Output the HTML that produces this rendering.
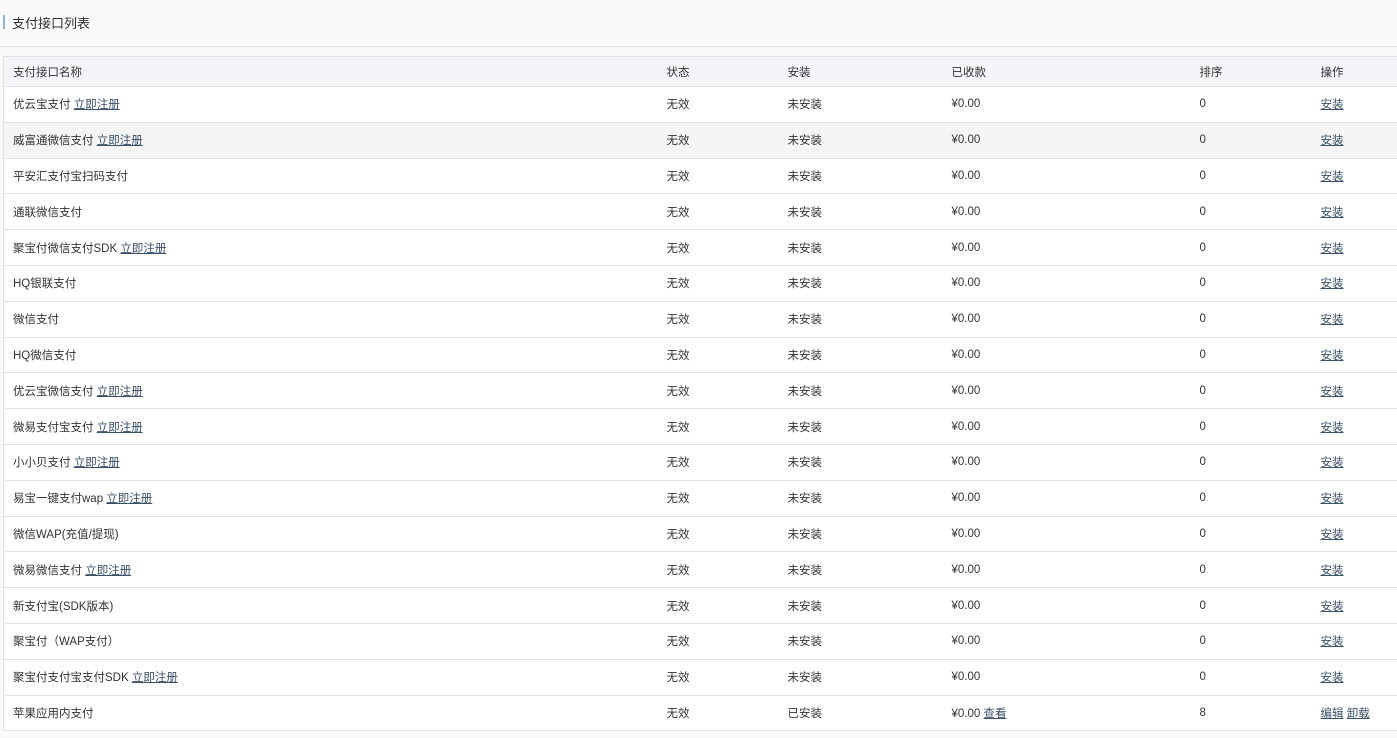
<!DOCTYPE html>
<html><head><meta charset="utf-8"><style>
*{margin:0;padding:0;box-sizing:border-box}
body{width:1397px;height:738px;background:#fafafa;font-family:"Liberation Sans","Noto Sans CJK SC",sans-serif;font-size:11.5px;color:#333;position:relative;overflow:hidden}
.title{position:absolute;left:0;top:0;width:1397px;height:47px;border-bottom:1px solid #ddd;background:#fafafa}
.bar{position:absolute;left:3px;top:15px;width:2px;height:14px;background:#8fb3d9}
.tt{position:absolute;left:12px;top:13px;font-size:13px;color:#333}
table{position:absolute;left:3px;top:56px;width:1394px;border-collapse:collapse;background:#fff;table-layout:fixed}
td{height:35.8px;border-bottom:1px solid #e2e2e2;padding:0;white-space:nowrap;vertical-align:middle}
tr td:first-child{padding-left:9px;border-left:1px solid #e2e2e2}
tr.head td{height:30px;background:#f4f5f9;border-top:1px solid #e2e2e2}
tr.hl td{background:#f5f5f5}
a{color:#3a5068;text-decoration:underline}
</style></head><body>
<div class="title"><div class="bar"></div><div class="tt">支付接口列表</div></div>
<table>
<colgroup><col style="width:663px"><col style="width:121px"><col style="width:164px"><col style="width:248px"><col style="width:121px"><col></colgroup>
<tr class="head"><td>支付接口名称</td><td>状态</td><td>安装</td><td>已收款</td><td>排序</td><td>操作</td></tr>
<tr><td>优云宝支付 <a>立即注册</a></td><td>无效</td><td>未安装</td><td>¥0.00</td><td>0</td><td><a>安装</a></td></tr>
<tr class="hl"><td>威富通微信支付 <a>立即注册</a></td><td>无效</td><td>未安装</td><td>¥0.00</td><td>0</td><td><a>安装</a></td></tr>
<tr><td>平安汇支付宝扫码支付</td><td>无效</td><td>未安装</td><td>¥0.00</td><td>0</td><td><a>安装</a></td></tr>
<tr><td>通联微信支付</td><td>无效</td><td>未安装</td><td>¥0.00</td><td>0</td><td><a>安装</a></td></tr>
<tr><td>聚宝付微信支付SDK <a>立即注册</a></td><td>无效</td><td>未安装</td><td>¥0.00</td><td>0</td><td><a>安装</a></td></tr>
<tr><td>HQ银联支付</td><td>无效</td><td>未安装</td><td>¥0.00</td><td>0</td><td><a>安装</a></td></tr>
<tr><td>微信支付</td><td>无效</td><td>未安装</td><td>¥0.00</td><td>0</td><td><a>安装</a></td></tr>
<tr><td>HQ微信支付</td><td>无效</td><td>未安装</td><td>¥0.00</td><td>0</td><td><a>安装</a></td></tr>
<tr><td>优云宝微信支付 <a>立即注册</a></td><td>无效</td><td>未安装</td><td>¥0.00</td><td>0</td><td><a>安装</a></td></tr>
<tr><td>微易支付宝支付 <a>立即注册</a></td><td>无效</td><td>未安装</td><td>¥0.00</td><td>0</td><td><a>安装</a></td></tr>
<tr><td>小小贝支付 <a>立即注册</a></td><td>无效</td><td>未安装</td><td>¥0.00</td><td>0</td><td><a>安装</a></td></tr>
<tr><td>易宝一键支付wap <a>立即注册</a></td><td>无效</td><td>未安装</td><td>¥0.00</td><td>0</td><td><a>安装</a></td></tr>
<tr><td>微信WAP(充值/提现)</td><td>无效</td><td>未安装</td><td>¥0.00</td><td>0</td><td><a>安装</a></td></tr>
<tr><td>微易微信支付 <a>立即注册</a></td><td>无效</td><td>未安装</td><td>¥0.00</td><td>0</td><td><a>安装</a></td></tr>
<tr><td>新支付宝(SDK版本)</td><td>无效</td><td>未安装</td><td>¥0.00</td><td>0</td><td><a>安装</a></td></tr>
<tr><td>聚宝付（WAP支付）</td><td>无效</td><td>未安装</td><td>¥0.00</td><td>0</td><td><a>安装</a></td></tr>
<tr><td>聚宝付支付宝支付SDK <a>立即注册</a></td><td>无效</td><td>未安装</td><td>¥0.00</td><td>0</td><td><a>安装</a></td></tr>
<tr><td>苹果应用内支付</td><td>无效</td><td>已安装</td><td>¥0.00 <a>查看</a></td><td>8</td><td><a>编辑</a> <a>卸载</a></td></tr>
</table>
</body></html>
